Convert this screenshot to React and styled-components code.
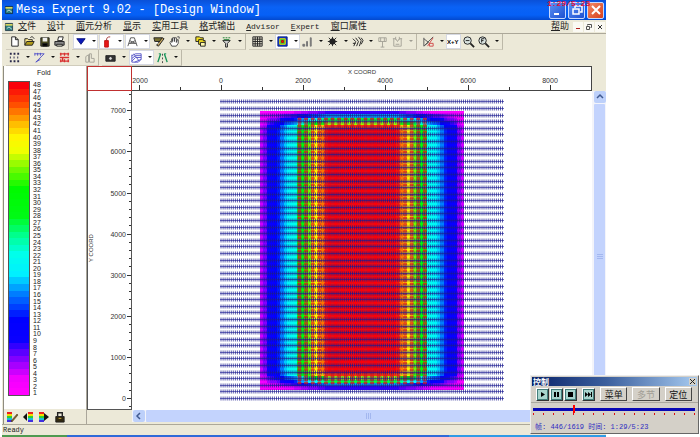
import React from "react";
import styled, { createGlobalStyle, css } from "styled-components";

const GlobalStyle = createGlobalStyle`
  * { box-sizing: border-box; }
  body { margin: 0; background: #fff; color: #222; font: 7px "Liberation Sans", Arial, "Noto Sans CJK SC", sans-serif; }
  button { padding: 0; margin: 0; border: 0; background: none; color: inherit; font: inherit; }
  svg { display: block; flex: none; }
`;

const mono = `"Liberation Mono", "Noto Sans CJK SC", monospace`;

const Desktop = styled.div`
  position: relative;
  display: flex;
  min-height: 100vh;
  overflow: hidden;
`;
const AppWindow = styled.div`
  flex: 1;
  min-width: 0;
  display: flex;
  flex-direction: column;
  margin: 0 94px 0 2px;
  background: #ece9d8;
`;
const TitleBar = styled.header`
  display: flex;
  align-items: center;
  gap: 2px;
  height: 20px;
  padding: 0 2px;
  background: linear-gradient(#0a50d8, #0a62f5 35%, #0560f6 75%, #0349ce);
  color: #fff;
`;
const Title = styled.h1`
  flex: 1;
  margin: 0;
  font: 12px ${mono};
  line-height: 16px;
  white-space: pre;
`;
const CaptionButton = styled.button`
  display: grid;
  place-items: center;
  width: 17px;
  height: 17px;
  border: 1px solid #c6d8ff;
  border-radius: 2px;
  background: ${(p) => (p.$close ? "linear-gradient(135deg, #f08a66, #d8401c)" : "linear-gradient(135deg, #5d92f5, #1c4fd0)")};
`;
const ClockOverlay = styled.span`
  position: absolute;
  top: 0;
  left: 547px;
  color: #e0103c;
  font: bold 8px ${mono};
  line-height: 8px;
`;
const MenuBar = styled.nav`
  display: flex;
  align-items: center;
  gap: 4px;
  height: 14px;
  padding: 0 1px 0 2px;
  border-bottom: 1px solid #aca899;
`;
const MenuList = styled.div`
  flex: 1;
  display: flex;
  align-items: center;
  gap: 11px;
`;
const MenuItem = styled.button`
  font-family: ${mono};
  font-size: ${(p) => (p.$latin ? 8 : 9)}px;
  line-height: 12px;
  white-space: nowrap;
  margin-left: ${(p) => (p.$end ? "auto" : 0)};
  &::first-letter { text-decoration: underline; }
`;
const ChildButtons = styled.div`
  display: flex;
  gap: 1px;
`;
const ChildButton = styled.button`
  display: grid;
  place-items: center;
  width: 10px;
  height: 10px;
  background: #faf9f3;
`;
const ToolBar = styled.div`
  display: flex;
  height: 16px;
  padding-left: 4px;
`;
const ToolGroup = styled.div`
  display: flex;
  align-items: center;
  gap: ${(p) => p.$gap || 0}px;
  padding: 0 1px;
  margin-right: 3px;
  border-right: 1px solid #bcb8a8;
  border-bottom: 1px solid #d0ccbc;
`;
const ToolButton = styled.button`
  display: flex;
  align-items: center;
  justify-content: ${(p) => (p.$split ? "space-between" : "center")};
  width: ${(p) => (p.$split ? 25 : 15)}px;
  height: 15px;
  padding: 0 ${(p) => (p.$split ? 2 : 0)}px 0 ${(p) => (p.$split ? 1 : 0)}px;
  ${(p) => p.$active && css`background: #fff; border: 1px solid #d6d9e2; padding: 0 1px 0 0;`}
  opacity: ${(p) => (p.disabled ? 0.35 : 1)};
`;
const Main = styled.main`
  flex: 1;
  display: grid;
  grid-template-columns: 84px 1fr;
  margin-left: 1px;
`;
const LegendPanel = styled.aside`
  display: flex;
  flex-direction: column;
  border-left: 1px solid #8f8c80;
  border-right: 1px solid #aaa69a;
`;
const LegendBody = styled.div`
  flex: 1;
  display: flex;
  flex-direction: column;
  padding: 3px 4px 13px;
  background: #fff;
`;
const LegendTitle = styled.h2`
  margin: 0;
  padding-left: 29px;
  font-size: 7px;
  font-weight: 400;
  line-height: 8px;
`;
const LegendScale = styled.div`
  flex: 1;
  display: flex;
  gap: 3px;
  padding-top: 4px;
`;
const ScaleBar = styled.div`
  width: 22px;
  border: 1px solid #555;
  display: flex;
  flex-direction: column;
`;
const ScaleCell = styled.div`
  flex: 1;
  background: ${(p) => p.$color};
`;
const ScaleLabels = styled.ol`
  display: flex;
  flex-direction: column;
  margin: 0;
  padding: 0;
  list-style: none;
`;
const ScaleLabel = styled.li`
  flex: 1 1 0;
  min-height: 0;
  line-height: 7px;
`;
const LegendTools = styled.div`
  display: flex;
  gap: 1px;
  height: 15px;
  padding: 0;
`;
const Workspace = styled.section`
  display: grid;
  grid-template-columns: 45px 1fr 14px;
  grid-template-rows: 25px 1fr 12px;
  padding-bottom: 2px;
`;
const Corner = styled.div`
  background: #fff;
  border: 1px solid #c03030;
`;
const XRuler = styled.div`
  grid-column: 2;
  background: #fff;
  border: 1px solid #444;
  border-left: 0;
  overflow: hidden;
`;
const YRuler = styled.div`
  grid-row: 2;
  grid-column: 1;
  background: #fff;
  border: 1px solid #555;
  border-top: 0;
  overflow: hidden;
`;
const PlotArea = styled.div`
  grid-row: 2;
  grid-column: 2;
  background: #fff;
  overflow: hidden;
`;
const ScrollTrack = styled.div`
  grid-row: ${(p) => (p.$vertical ? 2 : 3)};
  grid-column: ${(p) => (p.$vertical ? 3 : 2)};
  display: flex;
  flex-direction: ${(p) => (p.$vertical ? "column" : "row")};
  gap: 1px;
  padding: ${(p) => (p.$vertical ? "0 1px 0 2px" : "0 0 0 1px")};
  background: #f3f4fa;
`;
const ScrollButton = styled.button`
  display: grid;
  place-items: center;
  width: 12px;
  height: 12px;
  border-radius: 2px;
  background: #bdd0fa;
`;
const ScrollThumb = styled.button`
  flex: 1;
  display: grid;
  place-items: center;
  border-radius: 1px;
  background: #c3d3fd;
`;
const StatusBar = styled.footer`
  height: 11px;
  padding-left: 1px;
  border-top: 1px solid #aca899;
  font: 7px ${mono};
  line-height: 10px;
`;
const TaskStrip = styled.div`
  height: 2px;
  background: linear-gradient(90deg, #4f9a50 65px, #2f6ad8 65px 74%, #2f9be6 74%);
`;

const Player = styled.section`
  position: absolute;
  right: 1px;
  bottom: 3px;
  width: 169px;
  border: 1px solid;
  border-color: #eee #666 #666 #eee;
  background: #d4d0c8;
`;
const PlayerTitle = styled.header`
  display: flex;
  align-items: center;
  justify-content: space-between;
  height: 9px;
  margin: 1px 1px 0;
  padding: 0 1px;
  background: linear-gradient(90deg, #0a246a, #3c5f9d 45%, #a6caf0);
  color: #fff;
  font: bold 8px "Noto Sans CJK SC", sans-serif;
  line-height: 9px;
`;
const PlayerClose = styled.button`
  display: grid;
  place-items: center;
  width: 7px;
  height: 7px;
  background: #d4d0c8;
`;
const PlayerControls = styled.div`
  display: flex;
  align-items: center;
  gap: 5px;
  height: 17px;
  padding: 0 6px 0 5px;
  border-bottom: 1px solid #aaa79f;
`;
const Transport = styled.div`
  display: flex;
  gap: 1px;
`;
const TransportButton = styled.button`
  display: grid;
  place-items: center;
  width: 13px;
  height: 13px;
  border: 1px solid;
  border-color: #fff #333 #333 #fff;
  background: #a8d4cd;
  box-shadow: inset 0 0 0 1px #427e7b;
`;
const TextButton = styled.button`
  flex: 1;
  height: 14px;
  border: 1px solid;
  border-color: #fff #444 #444 #fff;
  font: 9px "Noto Sans CJK SC", sans-serif;
  line-height: 11px;
  color: ${(p) => (p.disabled ? "#a09d95" : "#111")};
`;
const Timeline = styled.div`
  padding: 2px 3px 0 2px;
`;
const Seek = styled.input`
  display: block;
  appearance: none;
  width: 100%;
  height: 8px;
  margin: 0;
  background: linear-gradient(transparent 3px, #0808b4 3px 6px, transparent 6px);
  &::-webkit-slider-thumb { appearance: none; width: 2px; height: 8px; border: 0; background: #f00; }
`;
const Ticks = styled.div`
  display: flex;
  justify-content: space-between;
`;
const TickMark = styled.i`
  width: 1px;
  height: 2px;
  background: #e01010;
`;
const FrameText = styled.p`
  margin: 0;
  padding: 8px 4px 1px;
  color: #2c2cc0;
  font: 7px ${mono};
  line-height: 9px;
  white-space: pre;
`;

/* Fold colour scale */
const stops = [
  [1, 255, 0, 255], [3, 240, 0, 255], [6, 130, 0, 255], [9, 10, 0, 255], [12, 0, 0, 255],
  [16, 0, 125, 255], [19, 0, 240, 255], [22, 0, 255, 235], [25, 0, 255, 140], [28, 0, 250, 20],
  [32, 0, 250, 0], [35, 110, 250, 0], [38, 240, 255, 0], [40, 255, 245, 0], [42, 255, 190, 0],
  [45, 255, 80, 0], [48, 250, 0, 10],
];
const foldColor = (f) => {
  const v = Math.max(1, Math.min(48, f));
  const i = Math.max(1, stops.findIndex((s) => s[0] >= v));
  const a = stops[i - 1];
  const b = stops[i];
  const t = (v - a[0]) / (b[0] - a[0]);
  return `rgb(${[1, 2, 3].map((k) => Math.round(a[k] + (b[k] - a[k]) * t)).join(",")})`;
};
const folds = Array.from({ length: 48 }, (_, i) => 48 - i);

/* Plot geometry: plot origin (0,0) and pixels per 1000 units */
const OX = 89;
const OY = 308;
const K = 41.1;

/* Inline fold by distance from the edge of coverage */
const profile = [[0, 3], [6, 6], [7, 9], [18, 12], [25, 18], [37, 23], [39, 28], [48, 34], [52, 38], [60, 41], [67, 48], [400, 48]];
const inlineFold = (d) => {
  const i = profile.findIndex((p) => p[0] > d);
  const [a, fa] = profile[i - 1];
  const [b, fb] = profile[i];
  return fa + ((fb - fa) * (d - a)) / (b - a);
};

function FoldMap() {
  const cells = [];
  const cell = 3.4;
  const x0 = 128, y0 = 20, nx = 60, ny = 82;
  for (let j = 0; j < ny; j++) {
    for (let i = 0; i < nx; i++) {
      const dx = (Math.min(i, nx - 1 - i) + 0.5) * cell;
      const dy = (Math.min(j, ny - 1 - j) + 0.8) * cell;
      const f = Math.round(inlineFold(dx) * Math.min(1, dy / 17));
      cells.push(<rect key={`${i}-${j}`} x={x0 + i * cell} y={y0 + j * cell} width={cell} height={cell} fill={foldColor(f)} />);
    }
  }
  let lines = "";
  let marks = "";
  for (let r = 0; r < 46; r++) {
    const y = Math.round(OY - r * 6.59) - 0.5;
    lines += `M${OX - 1} ${y}h284`;
    for (let c = 0; c <= 137; c++) marks += `M${(OX + c * 2.055).toFixed(1)} ${y - 2}v4`;
  }
  let shots = "";
  for (let c = 0; c < 20; c++) {
    for (let r = 0; r < 81; r++) {
      shots += `M${(166 + c * 6.6).toFixed(1)} ${(27 + r * 3.3).toFixed(1)}h3v2h-3z`;
    }
  }
  return (
    <svg width="100%" height="319" role="img" aria-label="Fold map">
      <g shapeRendering="crispEdges">{cells}</g>
      <path d={shots} fill="#e8101c" fillOpacity=".65" stroke="#d81020" strokeWidth=".6" />
      <path d={lines} stroke="#1c1c96" strokeOpacity=".6" />
      <path d={marks} stroke="#18188c" strokeOpacity=".7" strokeWidth="1" />
    </svg>
  );
}

function HorizontalScale() {
  return (
    <svg width="100%" height="23" fontSize="7" fill="#333" stroke="none">
      <text x="230" y="7" textAnchor="middle" fontSize="6">X COORD</text>
      {Array.from({ length: 11 }, (_, i) => i - 2).map((v) => {
        const x = Math.round(OX + v * K);
        return (
          <g key={v}>
            <rect x={x} y={v % 2 ? 20 : 18} width="1" height="5" />
            {v % 2 === 0 && <text x={x + (v < 0 ? 1 : 0)} y="16" textAnchor="middle">{Math.abs(v * 1000)}</text>}
          </g>
        );
      })}
    </svg>
  );
}

function VerticalScale() {
  return (
    <svg width="43" height="318" fontSize="7" fill="#333">
      <text transform="translate(5 157) rotate(-90)" textAnchor="middle" fontSize="6">Y COORD</text>
      {Array.from({ length: 39 }, (_, i) => i - 1).map((v) => {
        const y = Math.round(OY - (v * K) / 5) - 1;
        const major = v % 5 === 0;
        return (
          <g key={v}>
            <rect x={major ? 39 : 41} y={y} width="5" height="1" />
            {major && <text x="38" y={y + 3} textAnchor="end">{v * 200}</text>}
          </g>
        );
      })}
    </svg>
  );
}

/* Toolbar drawings on a 14 x 14 grid */
const art = {
  new: <path d="M4 2h4l3 3v7H4zM8 2v3h3" fill="#fff" />,
  open: <><path d="M2 11V4h3l1 1h4v2" fill="#ffe98a" /><path d="M2 11l2-4h8l-2 4z" fill="#b09a18" /><path d="M8 3c1-2 3-1 4 1" fill="none" /></>,
  save: <><path d="M3 3h9v9H3z" fill="#4d4d20" /><path d="M5 3h5v4H5z" fill="#eee" stroke="none" /><path d="M5 9h5v3H5z" fill="#000" /></>,
  print: <><path d="M2 7h10v4H2z" fill="#888" /><path d="M5 6l1-4h5l-1 4z" fill="#fff" /><path d="M4 10h6v2H4z" fill="#ddc" /></>,
  receiver: <path d="M3 4h9L7.500 10z" fill="#0a18b8" stroke="#061080" />,
  shot: <><path d="M5 6h4v7H5z" fill="#e81818" stroke="#c01010" /><path d="M7 6c0-3 1-4 4-4" fill="none" stroke="#a03030" /></>,
  tower: <path d="M2 12L5 3h4l3 9M3 9h8M4 6l6 3M10 6L4 9" fill="none" stroke="#555" />,
  erase: <><path d="M2 3h9l-1 4H3z" fill="#7a7130" /><path d="M5 11l6-8 2 1-6 8z" fill="#c7a75e" /><path d="M4 8l3 1" stroke="#fff" /></>,
  hand: <path d="M4 12L2 8l1-1 1 1V4h1v3-4h2v4-4h2v5l1-3h1v4l-2 3zM10 2h2v2" fill="#fff" stroke="#444" />,
  folders: <><path d="M2 2h4l1 1h3v4H2z" fill="#f5e020" /><path d="M5 5h4l1 1h2v4H5z" fill="#f5e020" /><path d="M7 8h5v4H7z" fill="#fff9b0" /></>,
  funnel: <><path d="M3 6h8L8 9v4H6V9z" fill="#d6d6d6" /><path d="M3 3h2M6 3h2M9 3h2M4 5h6" stroke="#1a7a30" /></>,
  grid: <path d="M2 2h10v10H2zM4.500 2v10M7 2v10M9.500 2v10M2 4.500h10M2 7h10M2 9.500h10" fill="none" />,
  fold: <><path d="M2 2h10v10H2z" fill="#1038d0" stroke="#0a2080" /><path d="M4 4h6v6H4z" fill="#30c040" stroke="#f5e000" /><path d="M6 6h2v2H6z" fill="#f02020" stroke="#c00" /></>,
  bars: <path d="M2 10h2v2H2zM6 7h1v5H6zM10 3h1v9h-1z" fill="#777" stroke="#777" />,
  burst: <><circle cx="7" cy="7" r="3" fill="#222" /><path d="M7 2v10M2 7h10M3 3l8 8M11 3l-8 8" /></>,
  waves: <path d="M2 4l3 3-2 5M5 3l3 4-2 5M8 2l3 4-2 6M11 3l2 3-2 4M2 9h3" fill="none" />,
  antenna: <path d="M3 3h8v4H3zM5 3v4M9 3v4M7 7v6M5 13h4" fill="none" />,
  tray: <path d="M2 4h3l2 3 2-3h3M3 4v8h8V4M5 2v3M9 2v3M5 10h4" fill="none" />,
  angle: <><path d="M2 3v9M2 4l5 4-5 4M3 11l9-9" fill="none" stroke="#555" /><path d="M6 12l6-9M8 9h4v3H8z" fill="none" stroke="#d04848" /></>,
  zoomOut: <><circle cx="6" cy="6" r="4" fill="#d8e2df" /><path d="M9 9l4 4" strokeWidth="2" /><path d="M4 6h4" /></>,
  zoomRect: <><circle cx="6" cy="6" r="4" fill="#d8e2df" /><path d="M9 9l4 4" strokeWidth="2" /><path d="M5 8V4h3M5 6h2" fill="none" /></>,
  points: <path d="M2 3h2M6 3h2M10 3h2M2 7h1M6 7h1M10 7h1M2 11h2M6 11h2M10 11h2" stroke="#28284a" strokeWidth="2" />,
  pattern: <><path d="M2 3h10M12 3l-9 9M3 12l5-3" fill="none" stroke="#5050c8" /><path d="M2 2v3M5 2v3M8 2v3" stroke="#5050c8" /></>,
  redGrid: <path d="M2 3h10M2 7h10M2 11h10M3 2v3M7 2v3M11 2v3M3 9v3M7 9v3M11 9v3M5 7v4" stroke="#d83030" strokeWidth="1.400" fill="none" />,
  export: <path d="M3 6l3-2v8H3zM7 3h2v5h3v4H7z" fill="none" />,
  camera: <><path d="M2 5h10v6H2z" fill="#333" /><circle cx="7" cy="8" r="2" fill="#ddd" /></>,
  rays: <path d="M2 5l4-2h6M2 8l4-3h6M2 11l4-4h6M5 12l7-3M2 4v8h7l3-3V3M4 3l6 8" fill="none" stroke="#5656c8" />,
  road: <><path d="M2 12L5 3M12 12L9 3" stroke="#17945a" strokeWidth="1.500" /><path d="M7 3v2M7 7v2M7 11v2" stroke="#444" /><path d="M3 3h2M9 3h2" stroke="#17945a" /></>,
  lock: <><path d="M3 7h9v6H3z" fill="#302810" /><path d="M5 7V3h5v4" fill="none" strokeWidth="1.500" /><path d="M6 9h3" stroke="#d0b040" /></>,
  app: <><path d="M2 2h10v10H2z" fill="#2c7f80" stroke="#123" /><path d="M2 4h10" stroke="#f6e45a" strokeWidth="2" /><path d="M4 9l3-2 4 3" stroke="#fff" fill="none" /></>,
};

function Icon({ name, size = 13 }) {
  return (
    <svg width={size} height={size} viewBox="0 0 14 14" stroke="#222" strokeWidth="1" fill="#222" aria-hidden="true">
      {art[name]}
    </svg>
  );
}

function SwatchIcon({ kind }) {
  const x = kind === "left" ? 7 : 2;
  return (
    <svg width="14" height="14" viewBox="0 0 14 14" aria-hidden="true">
      {["#e82020", "#f5d800", "#30d030", "#18b8e0", "#4030e0"].map((c, i) => (
        <rect key={c} x={x} y={2 + i * 2} width="5" height="2" fill={c} />
      ))}
      {kind === "edit" && <path d="M6 11l6-7 1 1-6 7z" fill="#806020" stroke="#432" strokeWidth=".5" />}
      {kind === "left" && <path d="M6 3v8L2 7z" fill="#111" />}
      {kind === "right" && <path d="M7 3v8l5-4z" fill="#111" />}
    </svg>
  );
}

function Tool({ name, label, split, active, disabled }) {
  return (
    <ToolButton aria-label={label} $split={split} $active={active} disabled={disabled}>
      {name === "xy" ? (
        <svg width="13" height="9" fontSize="6" fontWeight="bold"><text x="0" y="7">X+Y</text></svg>
      ) : <Icon name={name} />}
      {split && <svg width="5" height="3"><path d="M1 0h4L3 2z" fill="#111" /></svg>}
    </ToolButton>
  );
}

const Chevron = ({ left }) => (
  <svg width="8" height="8" fill="none" stroke="#405a90" strokeWidth="1.500">
    <path d={left ? "M5 1L2 4l3 3" : "M1 5l3-3 3 3"} />
  </svg>
);
const Grip = ({ vertical }) => (
  <svg width="6" height="6" stroke="#a3b7ef"><path d={vertical ? "M0 .5h6M0 2.500h6M0 4.500h6" : "M.5 0v6M2.500 0v6M4.500 0v6"} /></svg>
);

const menus = ["文件", "设计", "面元分析", "显示", "实用工具", "格式输出", "Advisor", "Expert", "窗口属性"];
const transport = [
  ["Play", "M2 1v5l4-2.500z"],
  ["Pause", "M1 1h2v5H1zM4 1h2v5H4z"],
  ["Stop", "M1 1h5v5H1z"],
];

export default function App() {
  return (
    <Desktop>
      <GlobalStyle />
      <AppWindow>
        <TitleBar>
          <Icon name="app" size={10} />
          <Title>Mesa Expert 9.02 - [Design Window]</Title>
          <CaptionButton aria-label="Minimize"><svg width="11" height="11"><path d="M2 8h5v2H2z" fill="#fff" /></svg></CaptionButton>
          <CaptionButton aria-label="Restore"><svg width="12" height="12" fill="none" stroke="#fff" strokeWidth="1.500"><path d="M4 4V2h7v6H9M2 5h6v5H2z" /></svg></CaptionButton>
          <CaptionButton $close aria-label="Close"><svg width="12" height="12" stroke="#fff" strokeWidth="2"><path d="M2 2l8 8M10 2l-8 8" /></svg></CaptionButton>
        </TitleBar>
        <MenuBar>
          <Icon name="app" size={10} />
          <MenuList>
            {menus.map((m, i) => <MenuItem key={m} $latin={i === 6 || i === 7}>{m}</MenuItem>)}
            <MenuItem $end>帮助</MenuItem>
          </MenuList>
          <ChildButtons>
            <ChildButton aria-label="Minimize document"><svg width="6" height="6"><path d="M1 4h4v1H1z" fill="#b02020" /></svg></ChildButton>
            <ChildButton aria-label="Restore document"><svg width="8" height="8" fill="none" stroke="#555"><path d="M2.500 2.500v-1h4v3h-1M1.500 3.500h3v3h-3z" /></svg></ChildButton>
            <ChildButton aria-label="Close document"><svg width="6" height="6" stroke="#333"><path d="M1 1l4 4M5 1L1 5" /></svg></ChildButton>
          </ChildButtons>
        </MenuBar>
        <ToolBar>
          <ToolGroup>
            <Tool name="new" label="New" />
            <Tool name="open" label="Open" />
            <Tool name="save" label="Save" />
            <Tool name="print" label="Print" />
          </ToolGroup>
          <ToolGroup $gap={1}>
            <Tool name="receiver" label="Receivers" split active />
            <Tool name="shot" label="Shots" split active />
            <Tool name="tower" label="Templates" split active />
            <Tool name="erase" label="Edit" />
            <Tool name="hand" label="Select" split />
            <Tool name="folders" label="Layers" split />
            <Tool name="funnel" label="Filter" split />
          </ToolGroup>
          <ToolGroup>
            <Tool name="grid" label="Bin grid" split />
            <Tool name="fold" label="Fold" split active />
            <Tool name="bars" label="Offsets" split />
            <Tool name="burst" label="Azimuths" split />
            <Tool name="waves" label="Ray paths" split />
            <Tool name="antenna" label="Antenna" disabled />
            <Tool name="tray" label="Migration" split disabled />
          </ToolGroup>
          <ToolGroup>
            <Tool name="angle" label="Measure" split />
            <Tool name="xy" label="Coordinates" active />
            <Tool name="zoomOut" label="Zoom out" />
            <Tool name="zoomRect" label="Zoom full" split />
          </ToolGroup>
        </ToolBar>
        <ToolBar>
          <ToolGroup>
            <Tool name="points" label="Points" split />
            <Tool name="pattern" label="Pattern" split />
            <Tool name="redGrid" label="Lines" split />
            <Tool name="export" label="Export" disabled />
          </ToolGroup>
          <ToolGroup $gap={1}>
            <Tool name="camera" label="Snapshot" split />
            <Tool name="rays" label="Rays" split active />
            <Tool name="road" label="Road" split />
          </ToolGroup>
        </ToolBar>
        <Main>
          <LegendPanel>
            <LegendBody>
              <LegendTitle>Fold</LegendTitle>
              <LegendScale>
                <ScaleBar>{folds.map((f) => <ScaleCell key={f} $color={foldColor(f)} />)}</ScaleBar>
                <ScaleLabels>{folds.map((f) => <ScaleLabel key={f}>{f}</ScaleLabel>)}</ScaleLabels>
              </LegendScale>
            </LegendBody>
            <LegendTools>
              <ToolButton aria-label="Edit colours"><SwatchIcon kind="edit" /></ToolButton>
              <ToolButton aria-label="Shift colours left"><SwatchIcon kind="left" /></ToolButton>
              <ToolButton aria-label="Shift colours right"><SwatchIcon kind="right" /></ToolButton>
              <ToolButton aria-label="Lock scale"><Icon name="lock" /></ToolButton>
            </LegendTools>
          </LegendPanel>
          <Workspace>
            <Corner />
            <XRuler><HorizontalScale /></XRuler>
            <YRuler><VerticalScale /></YRuler>
            <PlotArea><FoldMap /></PlotArea>
            <ScrollTrack $vertical>
              <ScrollButton aria-label="Scroll up"><Chevron /></ScrollButton>
              <ScrollThumb aria-label="Vertical position"><Grip vertical /></ScrollThumb>
            </ScrollTrack>
            <ScrollTrack>
              <ScrollButton aria-label="Scroll left"><Chevron left /></ScrollButton>
              <ScrollThumb aria-label="Horizontal position"><Grip /></ScrollThumb>
            </ScrollTrack>
          </Workspace>
        </Main>
        <StatusBar>Ready</StatusBar>
        <TaskStrip />
      </AppWindow>
      <ClockOverlay>1:29/5:23</ClockOverlay>
      <Player>
        <PlayerTitle>
          控制
          <PlayerClose aria-label="Close player"><svg width="5" height="5" stroke="#222"><path d="M0 0l5 5M5 0L0 5" /></svg></PlayerClose>
        </PlayerTitle>
        <PlayerControls>
          <Transport>
            {transport.map(([label, d]) => (
              <TransportButton key={label} aria-label={label}><svg width="7" height="7"><path d={d} /></svg></TransportButton>
            ))}
          </Transport>
          <TransportButton aria-label="Fast forward"><svg width="7" height="7"><path d="M0 1v5l3-2.500zM3 1v5l3-2.500zM6 1h1v5H6z" /></svg></TransportButton>
          <TextButton>菜单</TextButton>
          <TextButton disabled>多节</TextButton>
          <TextButton>定位</TextButton>
        </PlayerControls>
        <Timeline>
          <Seek type="range" min="0" max="1619" defaultValue="400" aria-label="Frame" />
          <Ticks>{Array.from({ length: 17 }, (_, i) => <TickMark key={i} />)}</Ticks>
        </Timeline>
        <FrameText>帧: 446/1619 时间: 1:29/5:23</FrameText>
      </Player>
    </Desktop>
  );
}
